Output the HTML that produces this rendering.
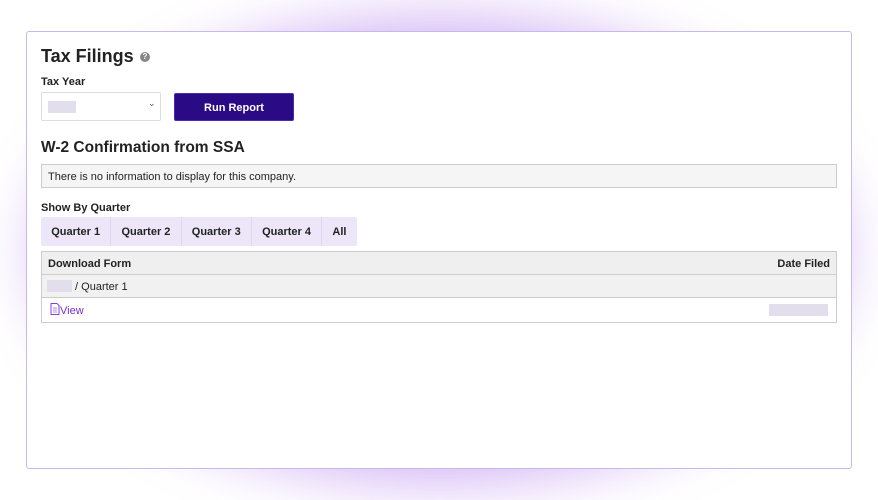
<!DOCTYPE html>
<html><head><meta charset="utf-8"><style>
*{box-sizing:border-box;margin:0;padding:0}
body{width:878px;height:500px;background:#fff;position:relative;overflow:hidden;font-family:"Liberation Sans",sans-serif;color:#222}
.glow{position:absolute;left:60px;top:40px;width:760px;height:420px;border-radius:50%;box-shadow:0 0 60px 20px rgba(150,80,230,.45)}
.card{position:absolute;left:26px;top:31px;width:826px;height:438px;background:#fff;border:1px solid #c9b8ee;border-radius:3px}
.a{position:absolute}
h1{position:absolute;left:41px;top:46px;font-size:18px;font-weight:bold;color:#222}
.help{position:absolute;left:140px;top:52px;width:10px;height:10px;border-radius:50%;background:#888;color:#fff;font-size:8px;font-weight:bold;text-align:center;line-height:10px}
.lbl{font-size:11px;font-weight:bold}
.sel{left:41px;top:92px;width:120px;height:29px;border:1px solid #ddd;border-radius:2px;background:#fff}
.ph{background:#e2deec}
.btn{left:174px;top:93px;width:120px;height:28px;background:#2b0b85;border:1px solid #4a2bb0;border-radius:2px;color:#fff;font-size:11px;font-weight:bold;text-align:center;line-height:29px}
h2{position:absolute;left:41px;top:139px;font-size:15.5px;font-weight:bold}
.info{left:41px;top:164px;width:796px;height:24px;border:1px solid #ccc;background:#f5f5f5;font-size:11px;padding-left:6px;line-height:24px}
.tabs{left:41px;top:217px;height:29px;display:flex;background:#ede6f9;border-radius:2px}
.tabs div{font-size:11px;font-weight:bold;padding:0 10.2px;line-height:30px;border-right:1px solid #e0d7f2}
.tabs div:last-child{border-right:0}
.tbl{left:41px;top:251px;width:796px;height:72px;border:1px solid #ccc}
.r{position:absolute;left:0;width:794px;font-size:11px;padding:0 6px}
</style></head><body>
<div class="glow"></div>
<div class="card"></div>
<h1>Tax Filings</h1><div class="help">?</div>
<div class="a lbl" style="left:41px;top:76px">Tax Year</div>
<div class="a sel"><div class="a ph" style="left:6px;top:8px;width:28px;height:12px"></div><div class="a" style="left:106px;top:5px;font-size:9px;color:#555">&#8964;</div></div>
<div class="a btn">Run Report</div>
<h2>W-2 Confirmation from SSA</h2>
<div class="a info">There is no information to display for this company.</div>
<div class="a lbl" style="left:41px;top:202px">Show By Quarter</div>
<div class="a tabs"><div>Quarter 1</div><div>Quarter 2</div><div>Quarter 3</div><div>Quarter 4</div><div>All</div></div>
<div class="a tbl">
<div class="r" style="top:0;height:23px;background:#efefef;border-bottom:1px solid #ccc;font-weight:bold;line-height:25px">Download Form<span style="float:right">Date Filed</span></div>
<div class="r" style="top:23px;height:23px;background:#f1f1f1;border-bottom:1px solid #ccc;line-height:25px"><span class="ph" style="display:inline-block;width:25px;height:12px;vertical-align:-2px;margin-left:-1px"></span> / Quarter 1</div>
<div class="r" style="top:46px;height:24px;line-height:26px;color:#7a2ed0">
<svg width="10" height="12" viewBox="0 0 10 12" style="vertical-align:-1px;margin-left:2px"><path d="M1 .5h6l2 2v9H1z" fill="none" stroke="#8a3ee0"/><path d="M3 5h4M3 7h4M3 9h4" stroke="#b98ef0"/></svg>View
<span class="ph" style="position:absolute;right:8px;top:6px;width:59px;height:12px"></span></div>
</div>
</body></html>
